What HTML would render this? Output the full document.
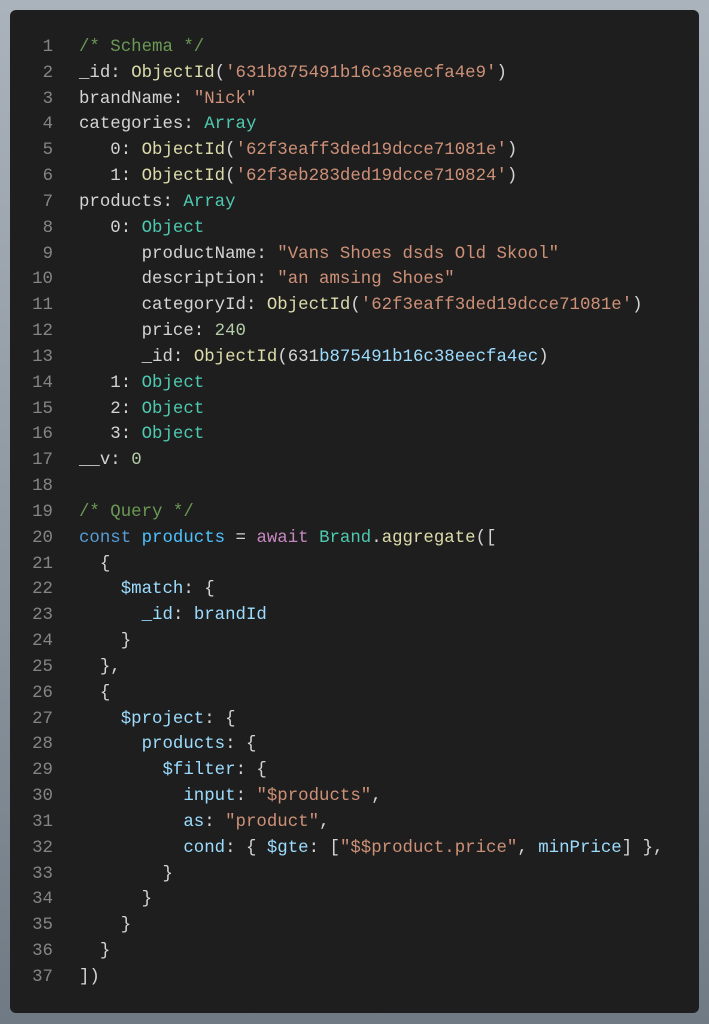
<!DOCTYPE html>
<html><head><meta charset="utf-8"><style>
html,body{margin:0;padding:0;}
body{width:709px;height:1024px;background:linear-gradient(#aab3bb,#8a949d 60%,#6f7a84);position:relative;overflow:hidden;}
.box{position:absolute;left:10px;top:10px;width:689px;height:1003px;background:#1e1e1e;border-radius:6px;}
.code{position:absolute;left:0;top:25px;font-family:"Liberation Mono",monospace;font-size:17.4px;line-height:25.83px;color:#d4d4d4;white-space:pre;}
.ln{position:absolute;left:12px;width:31px;text-align:right;color:#858585;}
.t{position:absolute;left:69px;}
.c{color:#6a9955}.f{color:#dcdcaa}.s{color:#ce9178}.ty{color:#4ec9b0}.n{color:#b5cea8}.k{color:#569cd6}.v{color:#4fc1ff}.p{color:#9cdcfe}.a{color:#c586c0}
</style></head><body><div class="box">
<div class="code"><div class="ln">1
2
3
4
5
6
7
8
9
10
11
12
13
14
15
16
17
18
19
20
21
22
23
24
25
26
27
28
29
30
31
32
33
34
35
36
37</div><div class="t"><span class="c">/* Schema */</span>
_id: <span class="f">ObjectId</span>(<span class="s">'631b875491b16c38eecfa4e9'</span>)
brandName: <span class="s">"Nick"</span>
categories: <span class="ty">Array</span>
   0: <span class="f">ObjectId</span>(<span class="s">'62f3eaff3ded19dcce71081e'</span>)
   1: <span class="f">ObjectId</span>(<span class="s">'62f3eb283ded19dcce710824'</span>)
products: <span class="ty">Array</span>
   0: <span class="ty">Object</span>
      productName: <span class="s">"Vans Shoes dsds Old Skool"</span>
      description: <span class="s">"an amsing Shoes"</span>
      categoryId: <span class="f">ObjectId</span>(<span class="s">'62f3eaff3ded19dcce71081e'</span>)
      price: <span class="n">240</span>
      _id: <span class="f">ObjectId</span>(631<span class="p">b875491b16c38eecfa4ec</span>)
   1: <span class="ty">Object</span>
   2: <span class="ty">Object</span>
   3: <span class="ty">Object</span>
__v: <span class="n">0</span>

<span class="c">/* Query */</span>
<span class="k">const</span> <span class="v">products</span> = <span class="a">await</span> <span class="ty">Brand</span>.<span class="f">aggregate</span>([
  {
    <span class="p">$match</span>: {
      <span class="p">_id</span>: <span class="p">brandId</span>
    }
  },
  {
    <span class="p">$project</span>: {
      <span class="p">products</span>: {
        <span class="p">$filter</span>: {
          <span class="p">input</span>: <span class="s">"$products"</span>,
          <span class="p">as</span>: <span class="s">"product"</span>,
          <span class="p">cond</span>: { <span class="p">$gte</span>: [<span class="s">"$$product.price"</span>, <span class="p">minPrice</span>] },
        }
      }
    }
  }
])</div></div>
</div></body></html>
